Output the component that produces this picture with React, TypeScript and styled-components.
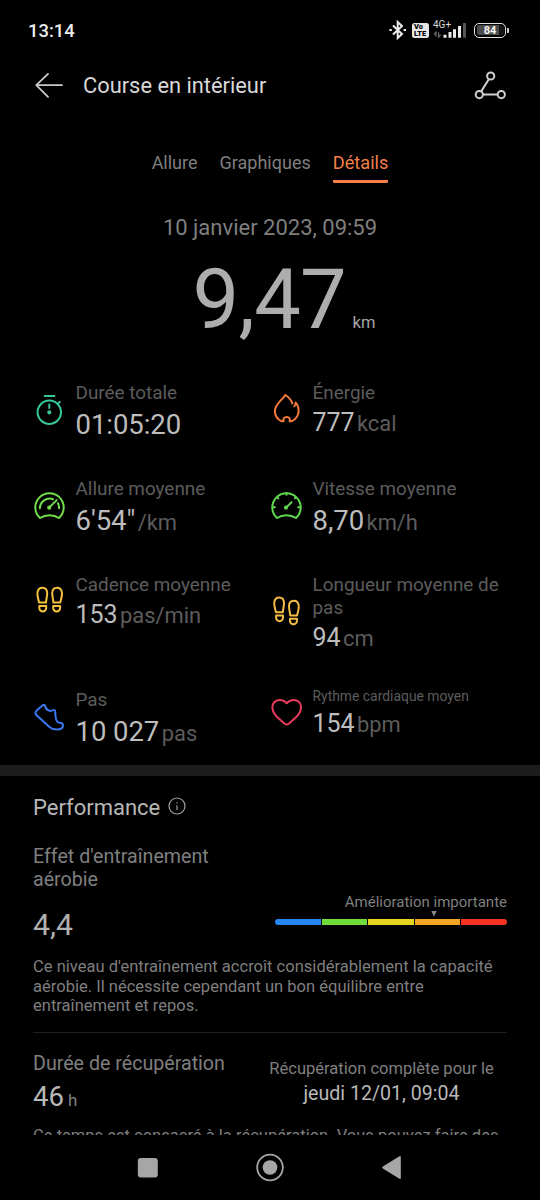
import React from "react";
import styled, { createGlobalStyle } from "styled-components";

const GlobalStyle = createGlobalStyle`
  * { box-sizing: border-box; }
  body { margin: 0; background: #000; font-family: Roboto, sans-serif; }
`;

const Screen = styled.div`
  width: 540px;
  height: 1200px;
  display: flex;
  flex-direction: column;
  overflow: hidden;
  background: #000;
  color: #b8b8b8;
`;

const Text = styled.span<{ $size: number; $line?: number; $color?: string; $track?: number; $weight?: number }>`
  display: block;
  white-space: pre;
  font-size: ${(p) => p.$size}px;
  line-height: ${(p) => (p.$line ? `${p.$line}px` : "normal")};
  color: ${(p) => p.$color ?? "#b8b8b8"};
  letter-spacing: ${(p) => p.$track ?? 0}px;
  font-weight: ${(p) => p.$weight ?? 400};
`;

const StatusBar = styled.header`
  flex: none;
  height: 56px;
  padding: 20px 31px 0 28px;
  display: flex;
  justify-content: space-between;
  align-items: flex-start;
`;

const StatusIcons = styled.div`
  display: flex;
  align-items: center;
  height: 20px;
`;

const VolteBadge = styled.div`
  width: 17px;
  height: 15px;
  margin: 1px 4px 0 5px;
  border-radius: 2.5px;
  background: #e6e6e6;
  color: #000;
  font-size: 7.4px;
  font-weight: 900;
  line-height: 6.5px;
  padding: 1px 0 0 2px;
  white-space: pre;
`;

const Signal = styled.div`
  display: flex;
  position: relative;
  width: 34px;
  height: 20px;
`;

const NetworkType = styled.span`
  position: absolute;
  left: 0;
  top: 0;
  font-size: 10px;
  line-height: 10px;
  color: #d8d8d8;
`;

const Battery = styled.div`
  width: 32px;
  height: 15px;
  margin: 0 1px 0 7px;
  border: 1.5px solid #e2e2e2;
  border-radius: 5px;
  padding: 1.5px;
`;

const BatteryFill = styled.div`
  height: 100%;
  border-radius: 2px;
  background: linear-gradient(90deg, #4c4c4c 80%, #161616 80%);
  color: #f4f4f4;
  font-size: 11px;
  font-weight: 700;
  line-height: 11px;
  text-align: center;
`;

const BatteryTip = styled.div`
  width: 2px;
  height: 5px;
  border-radius: 0 1px 1px 0;
  background: #d0d0d0;
`;

const TitleBar = styled.div`
  flex: none;
  height: 60px;
  padding: 0 34px 0 34px;
  display: flex;
  align-items: center;
`;

const Title = styled(Text)`
  flex: 1;
  margin-left: 19px;
`;

const Tabs = styled.nav`
  flex: none;
  height: 67px;
  padding-top: 36px;
  display: flex;
  justify-content: center;
  gap: 22px;
`;

const Tab = styled.div<{ $active?: boolean }>`
  height: 31px;
  border-bottom: 3px solid ${(p) => (p.$active ? "#f5804a" : "transparent")};
  border-radius: 1.5px;
`;

const Summary = styled.section`
  flex: none;
  height: 198px;
  padding-top: 32px;
  display: flex;
  flex-direction: column;
  align-items: center;
`;

const Distance = styled.div`
  display: flex;
  align-items: baseline;
  gap: 6.5px;
  margin-top: 13px;
  padding-left: 28px;
`;

const MetricGrid = styled.section`
  flex: none;
  display: grid;
  grid-template-columns: 237px 1fr;
  grid-template-rows: 96px 96px 115px 77px;
  padding-left: 34px;
`;

const MetricItem = styled.div`
  display: flex;
  align-items: flex-start;
`;

const MetricIcon = styled.svg<{ $top: number }>`
  flex: none;
  width: 31px;
  height: 30px;
  overflow: visible;
  margin: ${(p) => p.$top}px 10.5px 0 0;
  fill: none;
  stroke-width: 2;
  stroke-linecap: round;
  stroke-linejoin: round;
`;

const ValueLine = styled.div<{ $top?: number; $gap?: number }>`
  display: flex;
  align-items: baseline;
  gap: ${(p) => p.$gap ?? 2.5}px;
  margin-top: ${(p) => p.$top ?? 4}px;
`;

const Band = styled.div`
  flex: none;
  height: 11px;
  background: #1c1c1c;
`;

const Performance = styled.section`
  flex: 1;
  min-height: 0;
  overflow: hidden;
  padding: 19px 33px 0;
`;

const SectionTitle = styled.div`
  display: flex;
  align-items: center;
  gap: 8px;
  height: 26px;
`;

const InfoIcon = styled.svg`
  width: 18px;
  height: 18px;
  margin-bottom: 4px;
`;

const EffectRow = styled.div`
  display: flex;
  justify-content: space-between;
  height: 136px;
  padding-top: 24px;
`;

const Score = styled(Text)`
  margin-top: 16px;
`;

const EffectGauge = styled.div`
  width: 232px;
  padding-top: 49px;
  display: flex;
  flex-direction: column;
  align-items: flex-end;
`;

const Marker = styled.svg`
  flex: none;
  width: 6px;
  height: 6px;
  margin-right: 70px;
`;

const Scale = styled.div`
  display: flex;
  gap: 1px;
  width: 100%;
  height: 5.5px;
  margin-top: 2px;
  border-radius: 3px;
  overflow: hidden;
`;

const Segment = styled.div<{ $color: string }>`
  flex: 1;
  background: ${(p) => p.$color};
`;

const Rule = styled.div`
  height: 1px;
  margin-top: 16px;
  background: #1f1f1f;
`;

const RecoveryRow = styled.div`
  display: flex;
  justify-content: space-between;
  height: 93px;
  padding-top: 19px;
`;

const RecoveryDate = styled.div`
  width: 251px;
  padding-top: 7px;
  display: flex;
  flex-direction: column;
  align-items: center;
`;

const NavBar = styled.footer`
  flex: none;
  height: 65px;
  padding-top: 17px;
  display: flex;
  justify-content: center;
  gap: 94px;
`;

const NavIcon = styled.svg`
  width: 28px;
  height: 31px;
  overflow: visible;
  fill: #a6a6a6;
`;

const LABEL = "#5c5c5c";
const UNIT = "#5c5c5c";
const VALUE = "#bdbdbd";
const MUTED = "#7f7f7f";

const gaugeOutline = "M6 27A14.2 14.2 0 1 1 25 27C19.5 23.3 11.5 23.3 6 27Z";
const leftStep =
  "M5.2 17.6C4.1 14 3.2 10.5 3.5 7.5C3.9 4.2 5.8 2.8 8.3 2.8C11 2.8 13 4.2 13.2 8C13.3 11 12.3 14.2 12 17.6ZM5.3 20.9H12.2V23A3.45 3.45 0 0 1 5.3 23Z";

const icons: Record<string, { color: string; art: React.ReactNode }> = {
  stopwatch: {
    color: "#36c79c",
    art: (
      <>
        <circle cx="15.3" cy="17.3" r="11.7" />
        <path d="M10.8 1H20.3M24.6 8.1L25.8 7M15.3 9.6V13" />
        <circle cx="15.3" cy="17.3" r="1.1" />
      </>
    ),
  },
  flame: {
    color: "#f4793a",
    art: (
      <path d="M14.3 1C11.5 6 3.9 9.5 3.9 17.3C3.9 22 6.5 25.2 10.3 27.2H12.6C11.8 25 13 23 15.7 23C18.4 23 19.4 25 18.6 27.2H20.8C25 25.2 27.6 21.5 27.6 16.8C27.6 13.2 26.7 10.5 24.5 8.6C24.7 10.2 24.3 11.4 23.3 12.3M21.3 9.5C20.5 6 17.5 3 14.3 1" />
    ),
  },
  pace: {
    color: "#72dc4a",
    art: (
      <>
        <path d={gaugeOutline} />
        <path d="M5.9 17.2A9.6 9.6 0 0 1 19 8.3M24 12.2A9.6 9.6 0 0 1 25.1 17.2M15.4 16.4L22.7 9.1" />
        <circle cx="15.2" cy="16.6" r="1.1" />
      </>
    ),
  },
  speed: {
    color: "#5fd84f",
    art: (
      <>
        <path d={gaugeOutline} />
        <path d="M2 16.2H3.8M27.2 16.2H29M15.5 2V3.8M6.2 6.4L7.2 7.4M24.8 6.4L23.8 7.4M15.4 16.4L20.5 11.3" />
        <circle cx="15" cy="16.6" r="1.1" />
      </>
    ),
  },
  steps: {
    color: "#f3c03c",
    art: (
      <>
        <path d={leftStep} />
        <path d={leftStep} transform="translate(31.4 0) scale(-1 1)" />
      </>
    ),
  },
  stride: {
    color: "#f3bc45",
    art: (
      <>
        <path d={leftStep} transform="translate(-.2 -1.3)" />
        <path d={leftStep} transform="translate(31.2 1.9) scale(-1 1)" />
      </>
    ),
  },
  shoe: {
    color: "#3b78f0",
    art: (
      <path d="M9.3 2.9C10.3 2.5 11 3.3 11.2 4.3C11.7 7 13.3 8.3 15.5 8.9C17.5 9.4 19.3 7.3 20.5 8C21.8 8.8 21 10.5 21.4 13C21.6 15.5 21.6 17.5 23 19.4C24.8 21.8 29 19.8 29 23.3C29 26.5 26 27.5 22.7 27.5C19.7 27.5 17.5 26.8 15.5 25L2.3 12.9C1.3 12 1.2 10.3 2.2 9.2C4.3 6.8 6.8 4.9 9.3 2.9Z" />
    ),
  },
  heart: {
    color: "#e83c5e",
    art: (
      <path d="M15.7 6.3C13.8 4 11.5 2.9 9 2.9C4.5 2.9 1.3 6 1.3 10.6C1.3 17 8 21.8 13.8 26.7C15.2 27.9 16.2 27.9 17.6 26.7C23.4 21.8 30.1 17 30.1 10.6C30.1 6 26.9 2.9 22.4 2.9C19.9 2.9 17.6 4 15.7 6.3Z" />
    ),
  },
};

interface Metric {
  icon: string;
  top: number;
  label: string;
  value: string;
  unit?: string;
  size: number;
  small?: boolean;
}

const metrics: Metric[] = [
  { icon: "stopwatch", top: 14, label: "Durée totale", value: "01:05:20", size: 27.5 },
  { icon: "flame", top: 13, label: "Énergie", value: "777", unit: "kcal", size: 25 },
  { icon: "pace", top: 14, label: "Allure moyenne", value: "6'54\"", unit: "/km", size: 27.5 },
  { icon: "speed", top: 14, label: "Vitesse moyenne", value: "8,70", unit: "km/h", size: 27.5 },
  { icon: "steps", top: 12, label: "Cadence moyenne", value: "153", unit: "pas/min", size: 25 },
  { icon: "stride", top: 23, label: "Longueur moyenne de\npas", value: "94", unit: "cm", size: 25 },
  { icon: "shoe", top: 14, label: "Pas", value: "10 027", unit: "pas", size: 27.5 },
  { icon: "heart", top: 9, label: "Rythme cardiaque moyen", value: "154", unit: "bpm", size: 25, small: true },
];

function MetricCell({ icon, top, label, value, unit, size, small }: Metric) {
  return (
    <MetricItem>
      <MetricIcon viewBox="0 0 31 30" $top={top} stroke={icons[icon].color}>
        {icons[icon].art}
      </MetricIcon>
      <div>
        <Text $size={small ? 13.9 : 18.9} $line={small ? 17 : 23} $color={LABEL}>
          {label}
        </Text>
        <ValueLine>
          <Text $size={size} $color={VALUE} $track={-0.06}>{value}</Text>
          {unit && <Text $size={21.9} $color={UNIT} $line={24}>{unit}</Text>}
        </ValueLine>
      </div>
    </MetricItem>
  );
}

export default function App() {
  return (
    <Screen>
      <GlobalStyle />
      <StatusBar>
        <Text $size={18.4} $line={22} $color="#ededed" $weight={500}>13:14</Text>
        <StatusIcons>
          <svg width="18" height="20" viewBox="0 0 18 20" fill="none" stroke="#ececec" strokeWidth="2">
            <path d="M4 5.5L13 14L8.7 18V2L13 6L4 14.5" />
            <path d="M.4 10H2.8M14.6 10H17" strokeWidth="2.2" />
          </svg>
          <VolteBadge>{"Vo\nLTE"}</VolteBadge>
          <Signal>
            <NetworkType>4G+</NetworkType>
            <svg width="34" height="20" viewBox="0 0 34 20">
              <path d="M3 17V12.2L1 14.6M5.6 12.2V17L7.6 14.6" fill="none" stroke="#777" strokeWidth="1.1" />
              <path d="M10.5 14.7h3v3h-3zM15.5 12h3v5.7h-3zM20 9.3h3v8.4h-3zM25 6h3v11.7h-3z" fill="#ececec" />
              <path d="M30 3h3v14.7h-3z" fill="#555" />
            </svg>
          </Signal>
          <Battery>
            <BatteryFill>84</BatteryFill>
          </Battery>
          <BatteryTip />
        </StatusIcons>
      </StatusBar>

      <TitleBar>
        <svg width="30" height="26" viewBox="0 0 30 26" fill="none" stroke="#c8c8c8" strokeWidth="1.8" strokeLinecap="round" strokeLinejoin="round">
          <path d="M28 12.2H2.3M14 .8L2.3 12.2L14 23.8" />
        </svg>
        <Title $size={21.85} $line={26} $color="#d8d8d8">Course en intérieur</Title>
        <svg width="32" height="30" viewBox="0 0 32 30" fill="none" stroke="#cfcfcf" strokeWidth="2">
          <circle cx="16.7" cy="5" r="3.6" />
          <circle cx="5.3" cy="23.6" r="3.6" />
          <circle cx="27.3" cy="23.6" r="3.6" />
          <path d="M14.8 8.2L7.2 20.4M8.9 23.6H23.7" />
        </svg>
      </TitleBar>

      <Tabs>
        <Tab><Text $size={18} $line={22} $color={MUTED}>Allure</Text></Tab>
        <Tab><Text $size={18} $line={22} $color={MUTED}>Graphiques</Text></Tab>
        <Tab $active><Text $size={18.2} $line={22} $color="#f5804a">Détails</Text></Tab>
      </Tabs>

      <Summary>
        <Text $size={22} $line={26} $color={MUTED}>10 janvier 2023, 09:59</Text>
        <Distance>
          <Text $size={83} $line={92} $color="#adadad" $track={-0.7}>9,47</Text>
          <Text $size={16.5} $color="#a6a6a6">km</Text>
        </Distance>
      </Summary>

      <MetricGrid>
        {metrics.map((m) => (
          <MetricCell key={m.label} {...m} />
        ))}
      </MetricGrid>

      <Band />

      <Performance>
        <SectionTitle>
          <Text $size={22} $line={26}>Performance</Text>
          <InfoIcon viewBox="0 0 18 18" fill="none" stroke="#a0a0a0" strokeWidth="1.2">
            <circle cx="9" cy="9" r="8" />
            <path d="M9 8.2V13M9 5.2V6.6" />
          </InfoIcon>
        </SectionTitle>
        <EffectRow>
          <div>
            <Text $size={19.65} $line={23} $color={MUTED}>{"Effet d'entraînement\naérobie"}</Text>
            <Score $size={30.2} $line={36} $color="#b0b0b0">4,4</Score>
          </div>
          <EffectGauge>
            <Text $size={15} $line={17} $color={MUTED}>Amélioration importante</Text>
            <Marker viewBox="0 0 6 6"><path d="M.3 0H5.7L3 5.6Z" fill="#8c8c8c" /></Marker>
            <Scale>
              {["#2486f2", "#6fdc3c", "#e8d321", "#f5a524", "#f53322"].map((c) => (
                <Segment key={c} $color={c} />
              ))}
            </Scale>
          </EffectGauge>
        </EffectRow>
        <Text $size={16.55} $line={19.7} $color={MUTED}>
          {"Ce niveau d'entraînement accroît considérablement la capacité\naérobie. Il nécessite cependant un bon équilibre entre\nentraînement et repos."}
        </Text>
        <Rule />
        <RecoveryRow>
          <div>
            <Text $size={19.65} $line={23} $color={MUTED}>Durée de récupération</Text>
            <ValueLine $top={5} $gap={4}>
              <Text $size={27.5}>46</Text>
              <Text $size={17} $color={MUTED}>h</Text>
            </ValueLine>
          </div>
          <RecoveryDate>
            <Text $size={16.55} $line={20} $color={MUTED}>Récupération complète pour le</Text>
            <Text $size={19.6} $line={29}>jeudi 12/01, 09:04</Text>
          </RecoveryDate>
        </RecoveryRow>
        <Text $size={16.55} $line={20} $color={MUTED}>Ce temps est consacré à la récupération. Vous pouvez faire des</Text>
      </Performance>

      <NavBar>
        <NavIcon viewBox="0 0 28 31"><rect x="3.8" y="6" width="20" height="19.5" rx="3" /></NavIcon>
        <NavIcon viewBox="0 0 28 31">
          <circle cx="14" cy="15.5" r="12.8" fill="none" stroke="#a6a6a6" strokeWidth="1.8" />
          <circle cx="14" cy="15.5" r="7.3" />
        </NavIcon>
        <NavIcon viewBox="0 0 28 31"><path d="M4.8 14.6L21.5 4.3Q22.8 3.6 22.8 5V26Q22.8 27.4 21.5 26.7L4.8 16.4Q3.6 15.5 4.8 14.6Z" /></NavIcon>
      </NavBar>
    </Screen>
  );
}
